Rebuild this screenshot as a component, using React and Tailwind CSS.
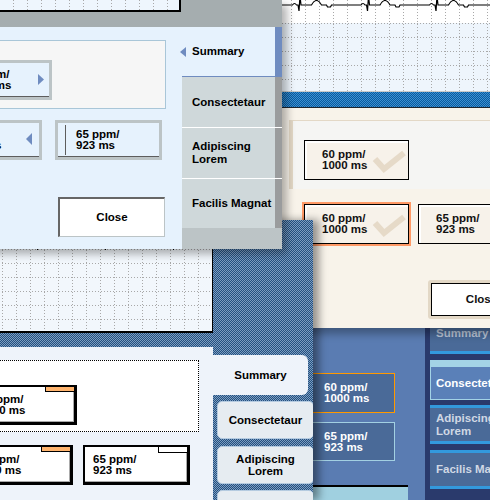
import React from 'react';

// dotted chart grid, used by the strip charts
function Grid({ w, h, x0, y0, step = 14, color = '#a8a8a8' }) {
  const xs = [];
  for (let x = x0; x < w; x += step) xs.push(x);
  const ys = [];
  for (let y = y0; y < h; y += step) ys.push(y);
  return (
    <svg className="absolute left-0 top-0" width={w} height={h}>
      {xs.map((x) => (
        <line key={'x' + x} x1={x + 0.5} y1={0} x2={x + 0.5} y2={h} stroke={color} strokeDasharray="1 2" />
      ))}
      {ys.map((y) => (
        <line key={'y' + y} x1={0} y1={y + 0.5} x2={w} y2={y + 0.5} stroke={color} strokeDasharray="1 2" />
      ))}
    </svg>
  );
}

function ecgPath(beats, width, base = 5) {
  let d = `M0 ${base}`;
  beats.forEach((b) => {
    d += ` L${b - 7} ${base} Q${b - 5} ${base - 3} ${b - 3} ${base} L${b - 1.5} ${base} L${b - 0.5} ${base + 6} L${b + 0.5} -4 L${b + 1.5} ${base} L${b + 12} ${base} Q${b + 17} ${base - 9} ${b + 22} ${base} L${b + 27} ${base} L${b + 28} ${base + 2} L${b + 31} ${base + 2} L${b + 32} ${base}`;
  });
  d += ` L${width} ${base}`;
  return d;
}

function TwoLine({ a, b }) {
  return (
    <>
      <span>{a}</span>
      <span>{b}</span>
    </>
  );
}

/* ---------- blue theme (bottom right) ---------- */
function BlueWindow() {
  return (
    <div className="absolute left-[300px] top-[328px] w-[260px] h-[172px] flex bg-[#5a7cb2] whitespace-nowrap">
      <div className="w-[125px] shrink-0 flex flex-col pt-[45px]">
        <div className="ml-[10px] w-[85px] h-[40px] border border-[#ff9900] bg-[#4a6a98] text-white pl-[13px] flex flex-col justify-center">
          <TwoLine a="60 ppm/" b="1000 ms" />
        </div>
        <div className="ml-[10px] mt-[9px] w-[85px] h-[39px] border border-[#a3d0e2] bg-[#4a6a98] text-white pl-[13px] flex flex-col justify-center">
          <TwoLine a="65 ppm/" b="923 ms" />
        </div>
        <div className="mt-auto w-[108px] h-[15px] border-t-2 border-black bg-[#a0d0e0]" />
      </div>
      <div className="flex-1 bg-[#2a3a6c] pl-[5px] flex flex-col">
        <div className="mt-[-13px] h-[39px] shrink-0 bg-[#4a6a98] border-b-[3px] border-[#3399dd] text-[#b8c4d6] pl-[6px] flex items-center">
          Summary
        </div>
        <div className="mt-[6px] h-[40px] shrink-0 border-t-[7px] border-x border-b border-[#a3d3e6] bg-[#5a80b8] text-white pl-[5px] flex items-center">
          Consectetaur
        </div>
        <div className="mt-[5px] h-[39px] shrink-0 border-y-[3px] border-[#3399dd] bg-[#4a6a98] text-[#d0d8e4] pl-[6px] flex flex-col justify-center leading-[13px]">
          <TwoLine a="Adipiscing" b="Lorem" />
        </div>
        <div className="mt-[6px] h-[39px] shrink-0 border-y-[3px] border-[#3399dd] bg-[#4a6a98] text-[#d0d8e4] pl-[6px] flex items-center">
          Facilis Magnat
        </div>
      </div>
    </div>
  );
}

/* ---------- beige theme (top right) ---------- */
function BeigeButton({ a, b, check, selected }) {
  return (
    <div
      className={
        selected
          ? 'relative w-[105px] h-[40px] border border-black bg-[#f7f2ea] shadow-[inset_2px_2px_0_#fff] outline-2 outline-[#ff9966] pl-[17px] flex flex-col justify-center text-[#111]'
          : 'relative w-[105px] h-[40px] border border-black bg-[#f7f2ea] shadow-[inset_2px_2px_0_#fff] pl-[17px] flex flex-col justify-center text-[#111]'
      }
    >
      {check && (
        <svg className="absolute left-0 top-0" width="105" height="40">
          <polyline points="70,18 79,28 99,12" fill="none" stroke="#e6dac8" strokeWidth="6" />
        </svg>
      )}
      <span className="relative">{a}</span>
      <span className="relative">{b}</span>
    </div>
  );
}

function BeigeWindow() {
  return (
    <div className="absolute left-[282px] top-0 w-[260px] h-[328px] flex flex-col bg-[#f8f3ea] shadow-[0_6px_8px_rgba(0,0,0,0.3)] whitespace-nowrap">
      <div className="relative h-[92px] shrink-0 border-b border-[#c8c8c8] bg-[linear-gradient(#ffffff_0_23px,#eef5fc_23px)] overflow-hidden">
        <Grid w={260} h={91} x0={9} y0={23} />
        <svg className="absolute left-0 top-0" width="260" height="14">
          <path d={ecgPath([17.5, 86, 154.5, 223], 260)} fill="none" stroke="#000" strokeWidth="1.2" />
        </svg>
      </div>
      <div className="h-[16px] shrink-0 border-b border-[#1c2630] bg-[image:repeating-conic-gradient(#0a5c9e_0%_25%,#3b8ed2_0%_50%)] bg-[length:2px_2px]" />
      <div className="flex flex-col pt-[12px]">
        <div className="ml-[7px] h-[69px] border-l-4 border-t border-[#e3d8c6] bg-[#f5f5f3] pt-[19px] pl-[11px]">
          <BeigeButton a="60 ppm/" b="1000 ms" check />
        </div>
        <div className="mt-[15px] ml-[22px] flex gap-[9px]">
          <BeigeButton a="60 ppm/" b="1000 ms" check selected />
          <BeigeButton a="65 ppm/" b="923 ms" />
        </div>
        <div className="mt-[36px] ml-[146px] w-[107px] h-[39px] border-[3px] border-[#e3d8c6] rounded-[3px]">
          <div className="h-full border border-black bg-white flex items-center justify-center text-[#111]">Close</div>
        </div>
      </div>
    </div>
  );
}

/* ---------- classic theme (bottom left) ---------- */
function ClassicButton({ a, b, flag }) {
  return (
    <div className="relative w-[107px] h-[40px] shrink-0 border-black border-t-2 border-l-2 border-r-[3px] border-b-[3px] bg-white shadow-[inset_-1px_-1px_0_#aaa] pl-[8px] flex flex-col justify-center">
      <div
        className={
          flag
            ? 'absolute top-0 right-0 w-[29px] h-[5px] bg-[#ffb46e] border-l border-b border-black'
            : 'absolute top-0 right-0 w-[29px] h-[6px] bg-white border-l border-b border-black'
        }
      />
      <TwoLine a={a} b={b} />
    </div>
  );
}

function ClassicTab({ children, className }) {
  return (
    <div
      className={
        'ml-[4px] w-[97px] h-[38px] shrink-0 border border-[#b5cbe0] bg-[#e6ecf1] rounded-[5px] flex flex-col items-center justify-center text-center leading-[12px] ' +
        className
      }
    >
      {children}
    </div>
  );
}

function ClassicWindow() {
  return (
    <div className="absolute left-[-100px] top-[220px] w-[413px] h-[280px] flex flex-col overflow-hidden bg-[image:repeating-conic-gradient(#23507f_0%_25%,#7c9cc0_0%_50%)] bg-[length:2px_2px] shadow-[6px_0_8px_rgba(0,0,0,0.4)] text-black whitespace-nowrap">
      <div className="relative w-[313px] h-[113px] shrink-0 border-r border-b-2 border-black bg-[#f2f7fc] overflow-hidden">
        <Grid w={312} h={111} x0={4} y0={1} />
        <svg className="absolute left-0 top-0" width="312" height="40">
          <line x1="137.5" y1="26" x2="137.5" y2="30" stroke="#000" />
          <line x1="205.5" y1="26" x2="205.5" y2="30" stroke="#000" />
          <line x1="273.5" y1="26" x2="273.5" y2="30" stroke="#000" />
        </svg>
      </div>
      <div className="mt-[14px] flex shrink-0 h-[200px]">
        <div className="w-[313px] bg-[#eef3fa] pt-[13px] flex flex-col">
          <div className="self-end mr-[14px] w-[290px] h-[72px] shrink-0 border border-dotted border-black bg-white flex justify-end pt-[24px] pr-[121px]">
            <ClassicButton a="60 ppm/" b="1000 ms" flag />
          </div>
          <div className="self-end mr-[23px] mt-[13px] flex gap-[10px]">
            <ClassicButton a="60 ppm/" b="1000 ms" flag />
            <ClassicButton a="65 ppm/" b="923 ms" />
          </div>
        </div>
        <div className="w-[100px] flex flex-col pt-[8px]">
          <div className="w-[95px] h-[40px] shrink-0 bg-[#eef3fa] rounded-r-[6px] flex items-center justify-center">Summary</div>
          <ClassicTab className="mt-[6px]">Consectetaur</ClassicTab>
          <ClassicTab className="mt-[7px]">
            <TwoLine a="Adipiscing" b="Lorem" />
          </ClassicTab>
          <ClassicTab className="mt-[6px]">Facilis Magnat</ClassicTab>
        </div>
      </div>
    </div>
  );
}

/* ---------- light blue theme (top left, front) ---------- */
function LightButton({ a, b, arrow, cursor }) {
  return (
    <div className="relative w-[107px] h-[40px] shrink-0 border-[3px] border-[#bcc4c6] bg-[#e6f2fd]">
      <div className="h-full border-b border-[#5d5d5d] pl-[18px] flex flex-col justify-center">
        <TwoLine a={a} b={b} />
      </div>
      <svg className="absolute left-[-3px] top-[-3px]" width="107" height="40">
        {arrow === 'right' && <polygon points="93,14 99,19.5 93,25" fill="#6f8cc0" />}
        {arrow === 'left' && <polygon points="97,13 91,19 97,25" fill="#6f8cc0" />}
        {cursor && <line x1="10.5" y1="5" x2="10.5" y2="35" stroke="#5d5d5d" />}
      </svg>
    </div>
  );
}

function LightTab({ children, last }) {
  return (
    <div
      className={
        last
          ? 'relative h-[49px] shrink-0 bg-[#cfd8da] pl-[10px] flex flex-col justify-center leading-[13px]'
          : 'relative h-[51px] shrink-0 border-b border-white bg-[#cfd8da] pl-[10px] flex flex-col justify-center leading-[13px]'
      }
    >
      <div className="absolute right-0 top-0 bottom-0 w-[7px] bg-[#9a9c9d]" />
      {children}
    </div>
  );
}

function LightWindow() {
  return (
    <div className="absolute left-[-218px] top-0 w-[500px] h-[249px] flex flex-col shadow-[5px_5px_8px_rgba(0,0,0,0.3)] text-black whitespace-nowrap">
      <div className="h-[27px] shrink-0 bg-[#a5adaf]">
        <div className="relative w-[399px] h-[12px] border-r-2 border-b-2 border-black bg-[#eef6fd] overflow-hidden">
          <Grid w={397} h={10} x0={7} y0={40} />
        </div>
      </div>
      <div className="flex h-[222px] shrink-0 bg-[#e6f2fd]">
        <div className="w-[400px] flex flex-col pt-[13px]">
          <div className="ml-[8px] w-[376px] h-[69px] shrink-0 border border-[#a9c6d8] bg-[#f6f6f6] flex justify-end pt-[19px] pr-[113px]">
            <LightButton a="60 ppm/" b="1000 ms" arrow="right" />
          </div>
          <div className="mt-[11px] flex justify-end gap-[13px] pr-[20px]">
            <LightButton a="60 ppm/" b="1000 ms" arrow="left" />
            <LightButton a="65 ppm/" b="923 ms" cursor />
          </div>
          <div className="self-end mr-[17px] mt-[37px] w-[107px] h-[40px] shrink-0 bg-white border-t-2 border-l-2 border-[#666] border-r border-b border-r-[#bcc4c6] border-b-[#bcc4c6] flex items-center justify-center">
            Close
          </div>
        </div>
        <div className="w-[100px] flex flex-col">
          <div className="relative h-[50px] shrink-0 border-b border-[#6f8cc0] pl-[10px] flex items-center">
            <svg className="absolute left-[-2px] top-[20px]" width="7" height="11">
              <polygon points="6,0 0,5 6,10" fill="#6f8cc0" />
            </svg>
            <div className="absolute right-0 top-0 bottom-0 w-[7px] bg-[#6f8cc0]" />
            Summary
          </div>
          <LightTab>Consectetaur</LightTab>
          <LightTab>
            <TwoLine a="Adipiscing" b="Lorem" />
          </LightTab>
          <LightTab last>Facilis Magnat</LightTab>
          <div className="flex-1 bg-[#bcc4c6]" />
        </div>
      </div>
    </div>
  );
}

export default function App() {
  return (
    <div className="relative w-[490px] h-[500px] overflow-hidden bg-[#4c6c9e] [font-family:'Liberation_Sans',Arial,sans-serif] text-[11.5px] font-bold leading-[11px]">
      <BlueWindow />
      <BeigeWindow />
      <ClassicWindow />
      <LightWindow />
    </div>
  );
}
